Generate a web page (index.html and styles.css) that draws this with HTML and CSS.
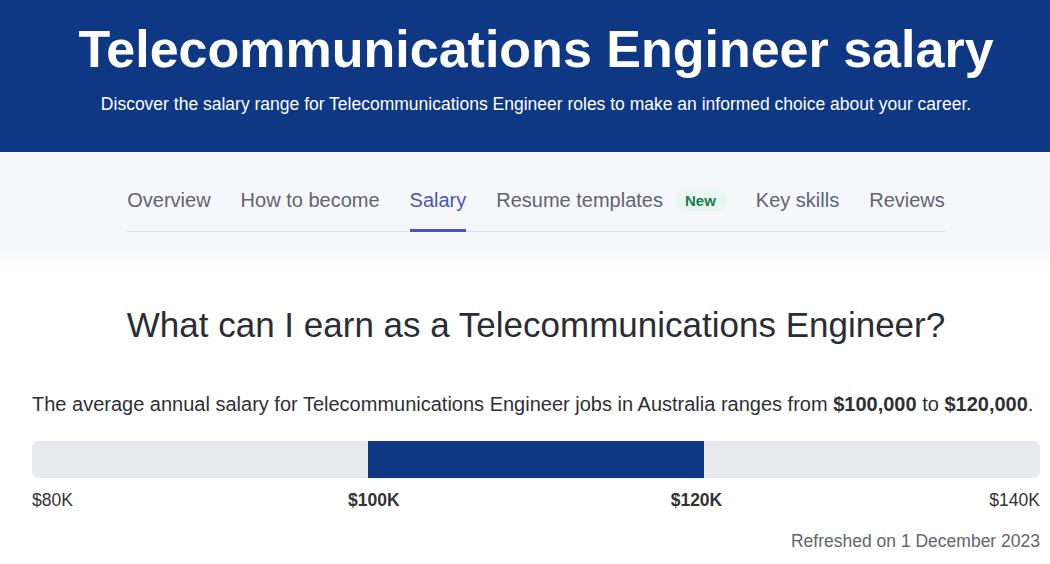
FILE: index.html
```html
<!DOCTYPE html>
<html lang="en">
<head>
  <meta charset="UTF-8" />
  <meta name="viewport" content="width=device-width, initial-scale=1.0"/>
  <title>Telecommunications Engineer salary</title>
  <link rel="stylesheet" href="styles.css">
</head>
<body>
  <header class="hero">
    <h1 class="hero-title">Telecommunications Engineer salary</h1>
    <p class="hero-sub">Discover the salary range for Telecommunications Engineer roles to make an informed choice about your career.</p>
  </header>

  <nav class="tabs-band">
    <ul class="tabs">
      <li class="tab">Overview</li>
      <li class="tab">How to become</li>
      <li class="tab active">Salary</li>
      <li class="tab">Resume templates <span class="badge">New</span></li>
      <li class="tab">Key skills</li>
      <li class="tab">Reviews</li>
    </ul>
  </nav>

  <main class="content">
    <h2 class="question">What can I earn as a Telecommunications Engineer?</h2>
    <p class="summary">The average annual salary for Telecommunications Engineer jobs in Australia ranges from <b>$100,000</b> to <b>$120,000</b>.</p>

    <div class="range">
      <div class="range-fill"></div>
    </div>
    <div class="range-labels">
      <span>$80K</span>
      <b class="mid-low">$100K</b>
      <b class="mid-high">$120K</b>
      <span>$140K</span>
    </div>

    <p class="refreshed">Refreshed on 1 December 2023</p>
  </main>
</body>
</html>
```

FILE: styles.css
```css
* {
  box-sizing: border-box;
}

body {
  margin: 0;
  font-family: "Liberation Sans", Arial, sans-serif;
  background: #fff;
  color: #2b2b33;
}

.hero {
  background: #0e3883;
  color: #fff;
  height: 152px;
  padding: 19px 10px 0 32px;
  text-align: center;
}

.hero-title {
  margin: 0;
  font-size: 52px;
  line-height: 60px;
  font-weight: bold;
}

.hero-sub {
  margin: 15px 0 0;
  font-size: 17.5px;
}

.tabs-band {
  background: linear-gradient(#f4f6fa, #f6f7fb 80%, #fff);
  height: 118px;
  padding: 25px 10px 0 32px;
  display: flex;
  justify-content: center;
}

.tabs {
  list-style: none;
  margin: 0;
  padding: 0;
  display: flex;
  gap: 30px;
  border-bottom: 1px solid #d9dce2;
  height: 55px;
}

.tab {
  font-size: 20px;
  color: #62656c;
  display: flex;
  align-items: center;
  height: 55px;
  padding-bottom: 6px;
  border-bottom: 3px solid transparent;
  margin-bottom: -1px;
}

.tab.active {
  color: #4b57b8;
  border-bottom-color: #4b57b8;
}

.badge {
  margin-left: 12px;
  padding: 2px 10px;
  border-radius: 10px;
  background: #e8f7ef;
  color: #1c7a4f;
  font-size: 15px;
  font-weight: bold;
}

.content {
  padding: 0 10px 0 32px;
}

.question {
  margin: 35px 0 0;
  text-align: center;
  font-size: 35px;
  line-height: 40px;
  font-weight: normal;
  color: #2b2d36;
}

.summary {
  margin: 47px 0 0;
  font-size: 20px;
  line-height: 24px;
  color: #2f3036;
}

.range {
  margin-top: 25px;
  height: 37px;
  background: #e8e9ed;
  border-radius: 6px;
  display: flex;
}

.range-fill {
  margin-left: 33.333%;
  width: 33.333%;
  background: #0e3883;
}

.range-labels {
  display: flex;
  margin-top: 12px;
  font-size: 17.5px;
  line-height: 20px;
  color: #333;
}

.mid-low {
  margin-left: auto;
  padding-left: 8px;
}

.mid-high {
  margin-left: auto;
  margin-right: auto;
  padding-left: 4px;
}

.refreshed {
  margin: 21px 0 0;
  text-align: right;
  font-size: 17.5px;
  line-height: 20px;
  color: #62656c;
}
```
